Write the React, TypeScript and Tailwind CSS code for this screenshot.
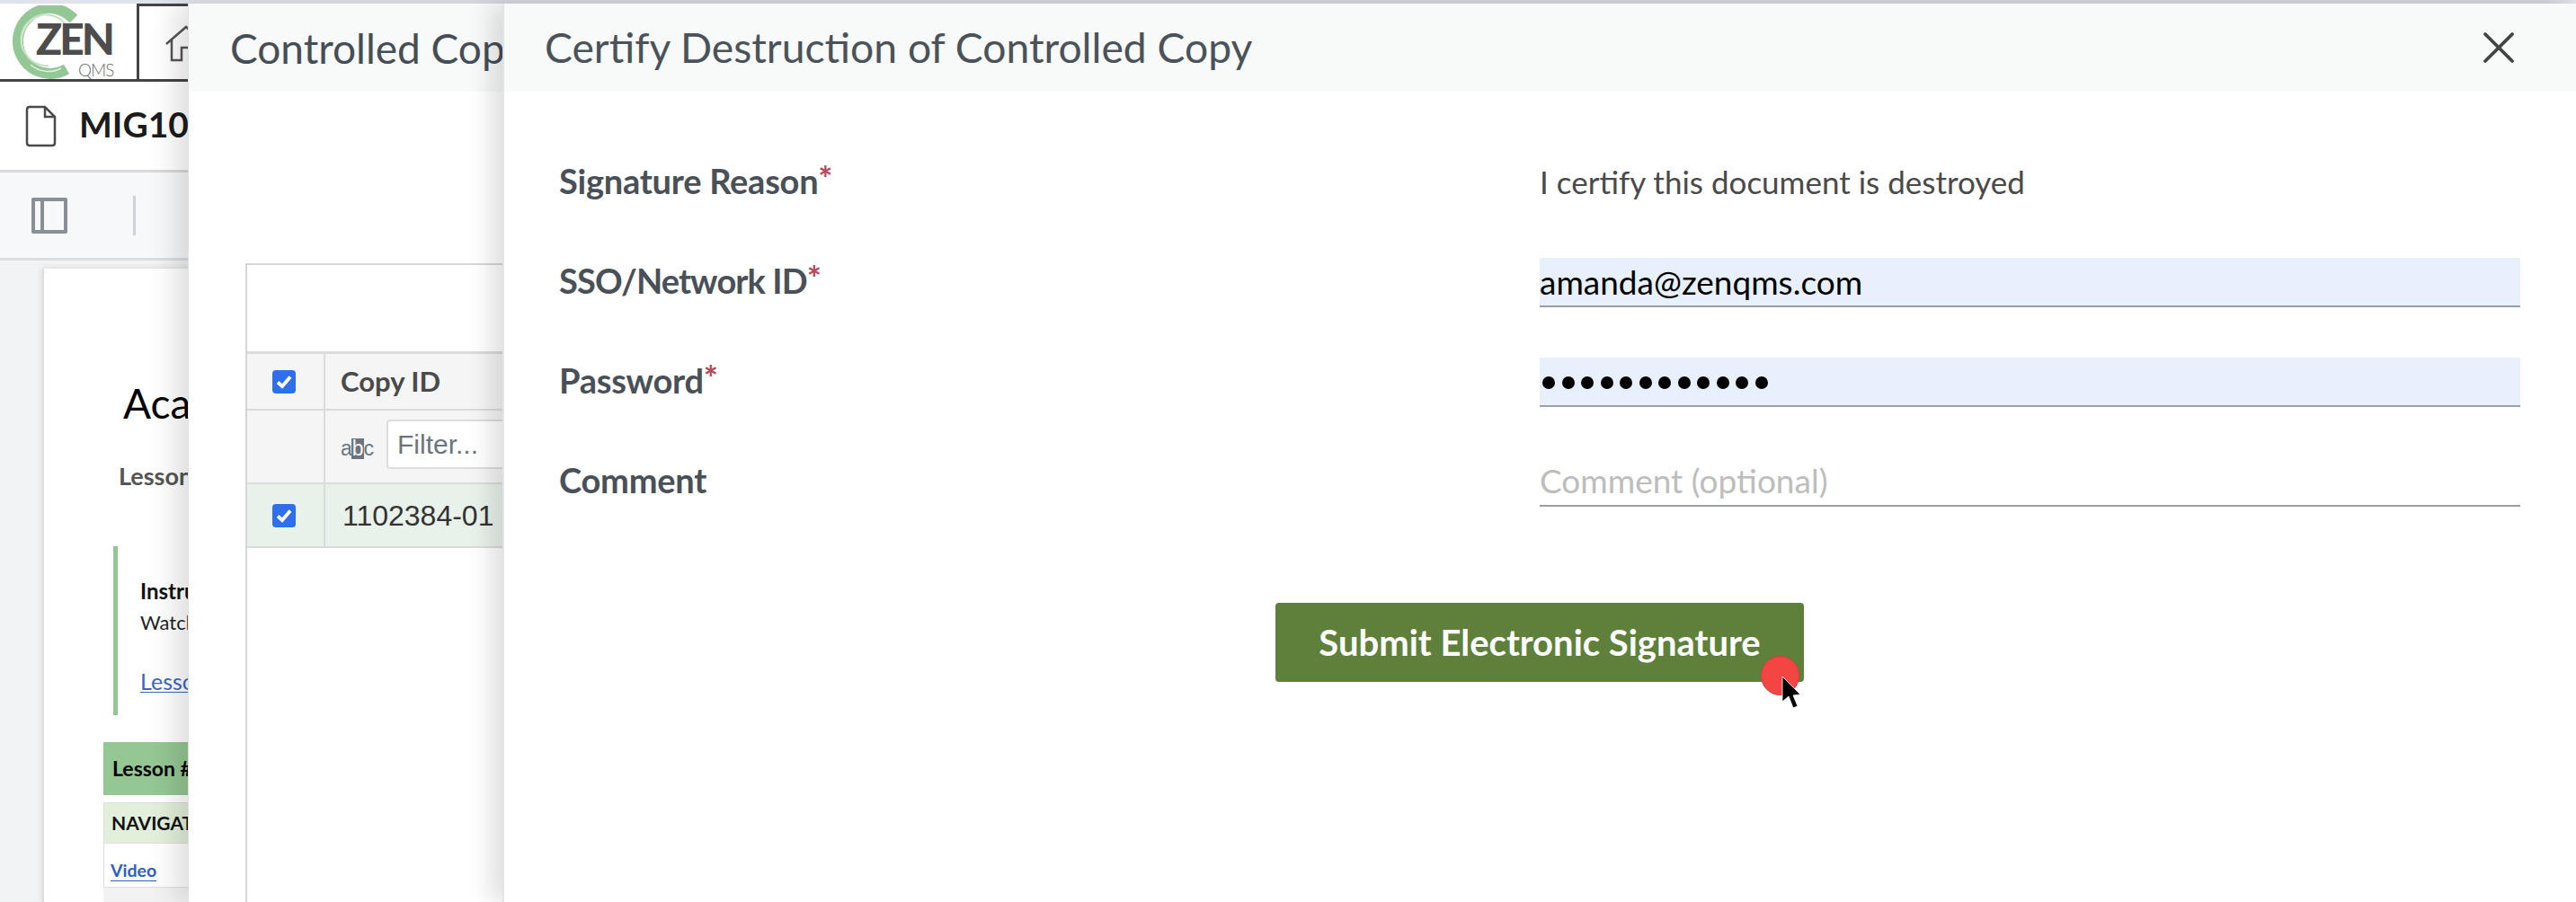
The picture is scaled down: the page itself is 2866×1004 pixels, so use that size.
import { X } from 'lucide-react';

const lato = 'font-["Lato","Liberation_Sans",sans-serif]';
const arial = 'font-["Liberation_Sans","Arial",sans-serif]';

function Logo() {
  return (
    <div className="relative h-[85px] w-[152px] shrink-0">
      <svg className="absolute left-[10px] top-[2px]" width="86" height="84" viewBox="0 0 86 84" fill="none">
        <path d="M72 15A36 36 0 1 0 64 71" stroke="#93c795" strokeWidth="12" />
        <path d="M60 14A30 30 0 0 0 16 50" stroke="#ffffff" strokeWidth="1.5" opacity="0.8" />
        <path d="M24 66A30 30 0 0 0 58 70" stroke="#ffffff" strokeWidth="1.5" opacity="0.7" />
        <path d="M62 20A26 26 0 0 0 20 56A26 26 0 0 0 44 67" stroke="#c5e2c5" strokeWidth="2" />
      </svg>
      <span className="absolute left-[40px] top-[14px] text-[48px] leading-[50px] font-black tracking-[-3px] text-[#4d4d4d]">ZEN</span>
      <span className="absolute left-[87px] top-[65px] text-[19px] leading-[18px] font-light tracking-[-1px] text-[#6a6a6a]">QMS</span>
    </div>
  );
}

function Required() {
  return <span className="relative top-[-3px] font-bold tracking-normal text-[#b5485a]">*</span>;
}

function Checkbox() {
  return (
    <span className="flex h-[26px] w-[26px] items-center justify-center rounded-[4px] bg-[#2f6fed]">
      <svg width="20" height="18" viewBox="0 0 20 18" fill="none">
        <path d="M3 9.5L8 14L17 3.5" stroke="#ffffff" strokeWidth="3.8" />
      </svg>
    </span>
  );
}

function BackgroundPage() {
  return (
    <div className="flex h-full flex-col">
      <div className="h-[4px] bg-[#e0e4ea]" />
      <header className="flex h-[87px] border-b-[3px] border-[#444444]">
        <Logo />
        <div className="flex w-[60px] items-start border-t-[3px] border-l-[3px] border-[#444444] pt-[21px] pl-[29px]">
          <svg className="shrink-0" width="46" height="42" viewBox="0 0 46 42" fill="none" stroke="#555555" strokeWidth="2.5">
            <path d="M1 21L23 2L45 21M7 16V39H18V25H28V39H39V16" />
          </svg>
        </div>
      </header>
      <div className="flex h-[101px] items-center gap-[25px] border-b-[3px] border-[#d9d9d9] pl-[28px]">
        <svg width="35" height="47" viewBox="0 0 35 47" fill="none" stroke="#4a4a4a" strokeWidth="2.5">
          <path d="M22 2H5Q2 2 2 5V42Q2 45 5 45H30Q33 45 33 42V13ZM22 2V13H33" />
        </svg>
        <span className="mb-[4px] text-[39px] leading-none font-bold text-[#1c1c1c]">MIG10</span>
      </div>
      <div className="flex h-[98px] items-center gap-[73px] border-b-[3px] border-[#dddddd] bg-[#f7f8f9] pl-[35px]">
        <span className="flex h-[40px] w-[40px] rounded-[2px] border-[4px] border-[#8a8f96]">
          <span className="w-[10px] border-r-[4px] border-[#8a8f96]" />
        </span>
        <span className="h-[44px] w-[3px] bg-[#cfd2d6]" />
      </div>
      <div className="flex-1 overflow-hidden bg-[#f1f3f5] pt-[9px] pl-[47px]">
        <div className="h-full w-[600px] border-l-[2px] border-[#dcdee1] bg-white pl-[66px] shadow-[0_0_8px_rgba(0,0,0,0.12)]">
          <p className="pt-[122px] pl-[22px] text-[46px] leading-[56px] text-black">Academy</p>
          <p className="mt-[37px] pl-[17px] text-[27px] leading-[32px] font-bold text-[#555555]">Lesson</p>
          <div className="mt-[62px] ml-[11px] h-[188px] border-l-[5px] border-[#93c692] pt-[35px] pl-[25px]">
            <p className="text-[24px] leading-[30px] font-bold text-[#111111]">Instructions</p>
            <p className="mt-[6px] text-[22px] leading-[28px] text-[#222222]">Watch</p>
            <a className="mt-[39px] block w-fit border-b-[1.5px] border-[#3a66c4] text-[25px] leading-[24px] text-[#3a66c4]">Lesson</a>
          </div>
          <div className="mt-[30px] flex h-[59px] items-center bg-[#94c793] pl-[10px] text-[23px] font-bold text-black">Lesson #</div>
          <div className="mt-[8px] flex h-[46px] items-center border border-[#dddddd] bg-[#e2efda] pl-[8px] text-[21px] font-bold text-[#111111]">NAVIGATION</div>
          <div className="flex h-[49px] items-center border-x border-b border-[#dddddd] pt-[11px] pl-[7px]">
            <a className="border-b-[1.5px] border-[#2f5fc4] text-[19.5px] leading-[23px] font-bold text-[#2f5fc4]">Video</a>
          </div>
          <div className="h-[40px] bg-[#f2f2f2]" />
        </div>
      </div>
    </div>
  );
}

function ControlledCopyDrawer() {
  return (
    <section className="absolute top-[4px] right-0 bottom-0 left-[209px] overflow-hidden border-l-[1px] border-[#dfe1e4] bg-white shadow-[-14px_0_28px_rgba(0,0,0,0.13)]">
      <div className="flex h-[98px] items-center whitespace-nowrap bg-[#f8f9f9] pl-[46px] text-[46px] text-[#454d55]">Controlled Copies</div>
      <div className="mt-[191px] ml-[63px] h-[900px] w-[700px] border-t-[2px] border-l-[2px] border-[#d6d6d6]">
        <div className="h-[99px] border-b-[3px] border-[#dbdbdb]" />
        <div className="grid grid-cols-[87px_1fr] text-[#4a4a4a]">
          <div className="flex h-[63px] items-center justify-center border-r-[2px] border-b-[2px] border-[#dbdbdb] bg-[#f5f5f5] pr-[3px]"><Checkbox /></div>
          <div className="flex h-[63px] items-center border-b-[2px] border-[#dbdbdb] bg-[#f5f5f5] pl-[17px] text-[31px] font-bold">Copy ID</div>
          <div className="h-[82px] border-r-[2px] border-b-[2px] border-[#dbdbdb] bg-[#f5f5f5]" />
          <div className="flex h-[82px] items-center gap-[16px] border-b-[2px] border-[#dbdbdb] bg-[#f5f5f5] pb-[5px] pl-[17px]">
            <span className={`${arial} mt-[10px] flex h-[25px] w-[35px] items-center text-[23px] leading-none tracking-[-1px] text-[#6c757d]`}>
              a<span className="bg-[#6c757d] px-[1px] text-[#f5f5f5]">b</span>c
            </span>
            <span className={`${arial} flex h-[55px] flex-1 items-center rounded-[4px] border-[2px] border-[#dddddd] bg-white pl-[10px] text-[30px] text-[#6c757d]`}>Filter...</span>
          </div>
          <div className="flex h-[71px] items-center justify-center border-r-[2px] border-b-[2px] border-[#dbdbdb] bg-[#e9f2ea] pr-[3px]"><Checkbox /></div>
          <div className={`${arial} flex h-[71px] items-center border-b-[2px] border-[#dbdbdb] bg-[#e9f2ea] pl-[19px] text-[32px] text-[#333333]`}>1102384-01</div>
        </div>
      </div>
    </section>
  );
}

function FormRow({ label, required, tight, children }: { label: string; required?: boolean; tight?: boolean; children: React.ReactNode }) {
  return (
    <div className="grid h-[111px] grid-cols-[1091px_1091px] items-center">
      <span className={`mb-[5px] text-[38px] leading-none font-bold text-[#4a5058] ${tight ? 'tracking-[-0.9px]' : 'tracking-[-0.25px]'}`}>
        {label}
        {required && <Required />}
      </span>
      {children}
    </div>
  );
}

function CertifyDrawer() {
  return (
    <section className="absolute top-[4px] right-0 bottom-0 left-[559px] flex flex-col border-l-[2px] border-[#e2e4e7] bg-white shadow-[-14px_0_24px_rgba(0,0,0,0.12)]">
      <div className="flex h-[98px] items-center justify-between bg-[#f8f9f9] pr-[56px] pl-[45px]">
        <h2 className="text-[46.25px] font-normal text-[#4a525a]">Certify Destruction of Controlled Copy</h2>
        <X size={60} strokeWidth={1.5} className="text-[#444444]" />
      </div>
      <div className="pt-[46px] pl-[61px]">
        <FormRow label="Signature Reason" required>
          <span className="mb-[3px] text-[35px] leading-none text-[#4a4a4a]">I certify this document is destroyed</span>
        </FormRow>
        <FormRow label="SSO/Network ID" required tight>
          <div className="flex h-[55px] items-center border-b-[2px] border-[#9a9ea5] bg-[#e8f0fe] text-[37px] text-black">amanda@zenqms.com</div>
        </FormRow>
        <FormRow label="Password" required>
          <div className="flex h-[55px] items-center gap-[7.5px] border-b-[2px] border-[#9a9ea5] bg-[#e8f0fe] pt-[2px] pl-[3px]">
            {Array.from({ length: 12 }).map((_, i) => (
              <span key={i} className="h-[14px] w-[14px] rounded-full bg-black" />
            ))}
          </div>
        </FormRow>
        <FormRow label="Comment">
          <div className="flex h-[55px] items-center border-b-[2px] border-[#9a9ea5] pb-[2px] text-[37px] text-[#bdbdbd]">Comment (optional)</div>
        </FormRow>
      </div>
      <div className="mt-[79px] pl-[858px]">
        <button className="relative flex h-[88px] w-[588px] items-center justify-center rounded-[4px] bg-[#5f803a] text-[40px] font-bold text-white">
          Submit Electronic Signature
          <span className="absolute top-[59px] left-[540px] h-[44px] w-[43px] rounded-full border border-[#c94040] bg-[#f44545]" />
          <svg className="absolute top-[81px] left-[563px]" width="22" height="38" viewBox="0 0 22 38">
            <path d="M1 1V29L8 23L13 36L18 34L13 22L21 21Z" fill="#000000" stroke="#ffffff" strokeWidth="0.8" />
          </svg>
        </button>
      </div>
    </section>
  );
}

export default function App() {
  return (
    <div className={`${lato} relative h-[1004px] w-[2866px] overflow-hidden bg-white`}>
      <BackgroundPage />
      <ControlledCopyDrawer />
      <CertifyDrawer />
    </div>
  );
}
